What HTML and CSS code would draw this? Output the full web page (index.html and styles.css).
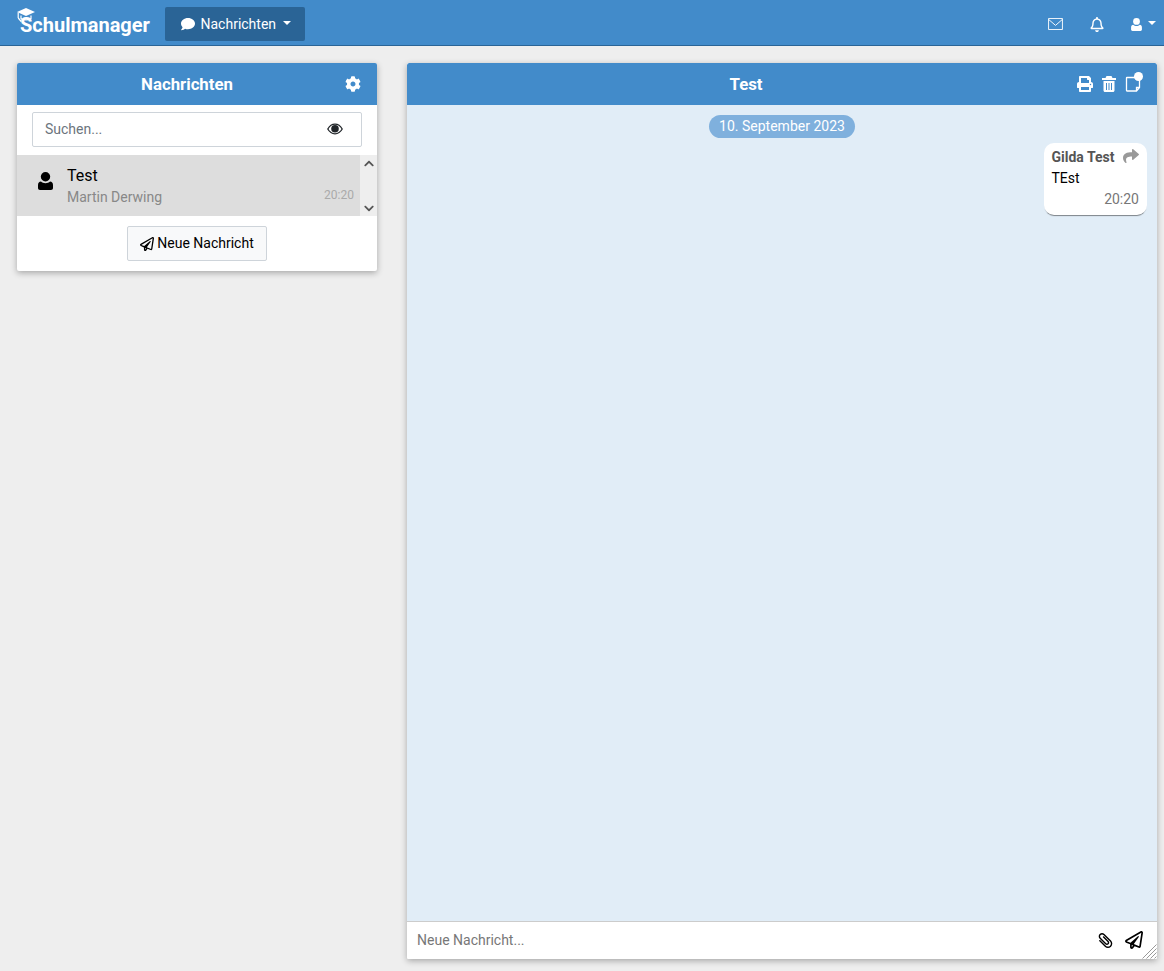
FILE: index.html
```html
<!DOCTYPE html>
<html lang="de">
<head>
    <meta charset="UTF-8">
    <meta name="viewport" content="width=device-width, initial-scale=1.0">
    <title>Schulmanager - Nachrichten</title>
    <link rel="stylesheet" href="styles.css">
</head>
<body>
    <nav class="navbar">
        <a class="brand" href="#">
            <svg class="brand-cap" viewBox="0 0 18 15">
                <path d="M9 0l9 4-9 4-9-4z"/>
                <path class="cap-line" d="M4 7.500v3c1.500 1.800 8.500 1.800 10 0v-3M1.200 4.500v5.500M1.200 10l3 3.500"/>
            </svg>
            <span>Schulmanager</span>
        </a>
        <button class="nav-menu">
            <svg class="icon-14" viewBox="0 0 512 512"><path d="M256 32C114.6 32 0 125.1 0 240c0 49.6 21.4 95 57 130.7C44.5 421.1 2.7 466 2.2 466.5c-2.2 2.3-2.8 5.7-1.5 8.7S4.8 480 8 480c66.3 0 116-31.8 140.6-51.4 32.7 12.3 69 19.4 107.4 19.4 141.4 0 256-93.1 256-208S397.4 32 256 32z"/></svg>
            <span>Nachrichten</span>
            <i class="caret"></i>
        </button>
        <div class="nav-right">
            <svg class="nav-mail" viewBox="0 0 16 13"><path d="M.5.5h15v12H.5zM.5 1.500 8 8l7.500-6.500" fill="none" stroke="#fff"/></svg>
            <svg class="nav-bell" viewBox="0 0 448 512"><path d="M439.39 362.29c-19.32-20.76-55.47-51.99-55.47-154.29 0-77.7-54.48-139.9-127.94-155.16V32c0-17.67-14.32-32-31.98-32s-31.98 14.33-31.98 32v20.84C118.56 68.1 64.08 130.3 64.08 208c0 102.3-36.15 133.53-55.47 154.29-6 6.45-8.66 14.16-8.61 21.71.11 16.4 12.98 32 32.1 32h383.8c19.12 0 32-15.6 32.1-32 .05-7.55-2.61-15.27-8.61-21.71zM67.53 368c21.22-27.97 44.42-74.33 44.53-159.42 0-.2-.06-.38-.06-.58 0-61.86 50.14-112 112-112s112 50.14 112 112c0 .2-.06.38-.06.58.11 85.1 23.31 131.46 44.53 159.42H67.53zM224 512c35.32 0 63.97-28.65 63.97-64H160.03c0 35.35 28.65 64 63.97 64z"/></svg>
            <div class="nav-user">
                <svg class="nav-user-icon" viewBox="0 0 15 18"><circle cx="7.500" cy="4.700" r="4.700"/><path d="M3 9.500c1 1 2.800 1.700 4.500 1.700s3.500-.7 4.500-1.700c1.800 0 3 1.500 3 3.500v3c0 1.200-.8 2-2 2H2c-1.200 0-2-.8-2-2v-3c0-2 1.200-3.500 3-3.500z"/></svg>
                <i class="caret"></i>
            </div>
        </div>
    </nav>

    <div class="main">
        <section class="panel panel-list">
            <header class="panel-head">
                <h2 class="panel-title">Nachrichten</h2>
                <svg class="icon-16" viewBox="0 0 512 512"><path d="M487.4 315.7l-42.6-24.6c4.3-23.2 4.3-47 0-70.2l42.6-24.6c4.9-2.8 7.1-8.6 5.500-14-11.100-35.600-30-67.800-54.700-94.600-3.800-4.100-10-5.100-14.800-2.300L380.800 110c-17.900-15.400-38.500-27.300-60.800-35.100V25.800c0-5.600-3.900-10.500-9.400-11.700-36.700-8.200-74.300-7.800-109.200 0-5.500 1.200-9.400 6.100-9.400 11.700V75c-22.200 7.900-42.800 19.800-60.800 35.100L88.700 85.500c-4.900-2.800-11-1.900-14.800 2.300-24.700 26.700-43.600 58.900-54.700 94.600-1.700 5.400.6 11.200 5.500 14L67.300 221c-4.300 23.200-4.300 47 0 70.200l-42.6 24.600c-4.900 2.800-7.100 8.600-5.500 14 11.100 35.600 30 67.800 54.700 94.600 3.800 4.100 10 5.100 14.800 2.300l42.600-24.600c17.900 15.400 38.500 27.300 60.800 35.100v49.200c0 5.600 3.900 10.500 9.400 11.700 36.700 8.200 74.300 7.800 109.200 0 5.500-1.200 9.400-6.100 9.400-11.700v-49.200c22.200-7.900 42.800-19.800 60.800-35.100l42.600 24.600c4.900 2.800 11 1.900 14.800-2.300 24.700-26.700 43.600-58.900 54.700-94.600 1.500-5.500-.7-11.300-5.600-14.100zM256 336c-44.100 0-80-35.900-80-80s35.900-80 80-80 80 35.900 80 80-35.900 80-80 80z"/></svg>
            </header>
            <div class="search">
                <input class="search-input" type="text" placeholder="Suchen...">
                <svg class="search-eye" viewBox="0 0 16 12">
                    <path d="M.8 6C2.500 3 5 1.200 8 1.200S13.500 3 15.200 6C13.500 9 11 10.800 8 10.800S2.500 9 .8 6z" fill="none" stroke="currentColor" stroke-width="1.300"/>
                    <circle cx="8" cy="5.700" r="3.800"/>
                </svg>
            </div>
            <div class="thread-wrap">
                <div class="thread">
                    <svg class="thread-avatar" viewBox="0 0 15 18"><circle cx="7.500" cy="4.700" r="4.700"/><path d="M3 9.500c1 1 2.800 1.700 4.500 1.700s3.500-.7 4.500-1.700c1.800 0 3 1.500 3 3.500v3c0 1.200-.8 2-2 2H2c-1.200 0-2-.8-2-2v-3c0-2 1.200-3.500 3-3.500z"/></svg>
                    <div class="thread-text">
                        <div class="thread-subject">Test</div>
                        <div class="thread-from">Martin Derwing</div>
                    </div>
                    <div class="thread-time">20:20</div>
                </div>
                <div class="scroller">
                    <svg class="chevron" viewBox="0 0 448 512"><path d="M240.971 130.524l194.343 194.343c9.373 9.373 9.373 24.569 0 33.941l-22.667 22.667c-9.357 9.357-24.522 9.375-33.901.04L224 227.495 69.255 381.516c-9.379 9.335-24.544 9.317-33.901-.04l-22.667-22.667c-9.373-9.373-9.373-24.569 0-33.941L207.030 130.525c9.372-9.373 24.568-9.373 33.941-.001z"/></svg>
                    <svg class="chevron chevron-down" viewBox="0 0 448 512"><path d="M240.971 130.524l194.343 194.343c9.373 9.373 9.373 24.569 0 33.941l-22.667 22.667c-9.357 9.357-24.522 9.375-33.901.04L224 227.495 69.255 381.516c-9.379 9.335-24.544 9.317-33.901-.04l-22.667-22.667c-9.373-9.373-9.373-24.569 0-33.941L207.030 130.525c9.372-9.373 24.568-9.373 33.941-.001z"/></svg>
                </div>
            </div>
            <div class="new-wrap">
                <button class="new-btn">
                    <svg class="icon-14 icon-plane" viewBox="0 0 512 512"><path d="M440 6.500L24 246.400c-34.400 19.900-31.100 70.800 5.700 85.900L144 379.600V464c0 46.400 59.200 65.500 86.600 28.600l43.800-59.100 111.900 46.200c5.900 2.400 12.100 3.600 18.300 3.600 8.200 0 16.300-2.100 23.600-6.200 12.800-7.200 21.600-20 23.900-34.500l59.400-387.200c6.100-40.100-36.900-68.800-71.500-48.900zM192 464v-64.600l36.600 15.100L192 464zm212.600-28.700l-153.800-63.500L391 169.500c10.700-15.500-9.500-33.500-23.700-21.200L155.800 332.600 48 288 464 48l-59.400 387.300z"/></svg>
                    <span>Neue Nachricht</span>
                </button>
            </div>
        </section>

        <section class="panel panel-chat">
            <header class="panel-head">
                <h2 class="panel-title chat-title">Test</h2>
                <div class="head-icons">
                    <svg class="icon-16" viewBox="0 0 512 512"><path d="M448 192V77.250c0-8.490-3.370-16.620-9.370-22.630L393.370 9.370c-6-6-14.140-9.370-22.630-9.370H96C78.330 0 64 14.330 64 32v160c-35.350 0-64 28.650-64 64v112c0 8.840 7.160 16 16 16h48v96c0 17.670 14.330 32 32 32h320c17.670 0 32-14.330 32-32v-96h48c8.840 0 16-7.160 16-16V256c0-35.350-28.650-64-64-64zm-64 256H128v-96h256v96zm0-224H128V64h192v48c0 8.840 7.160 16 16 16h48v96zm48 72c-13.250 0-24-10.750-24-24 0-13.260 10.750-24 24-24s24 10.740 24 24c0 13.250-10.750 24-24 24z"/></svg>
                    <svg class="icon-trash" viewBox="0 0 14 16"><path fill-rule="evenodd" d="M4.500 0h5l1 2H14v2H0V2h3.500zM1.500 5h11v9.500c0 .8-.7 1.500-1.500 1.500H3c-.8 0-1.500-.7-1.500-1.500zM4 7v7h1V7zM6.500 7v7h1V7zM9 7v7h1V7z"/></svg>
                    <div class="note">
                        <svg class="note-icon" viewBox="0 0 16 16"><path d="M2 1.500h12c.3 0 .5.200.5.500v9.500l-3 3.500H2c-.3 0-.5-.2-.5-.5V2c0-.3.200-.5.500-.5zM11.500 15v-3.500h3" fill="none" stroke="#fff" stroke-width="1.300"/></svg>
                        <i class="note-dot"></i>
                    </div>
                </div>
            </header>
            <div class="chat-body">
                <div class="date-pill">10. September 2023</div>
                <div class="bubble">
                    <div class="bubble-head">
                        <strong>Gilda Test</strong>
                        <svg class="bubble-share" viewBox="0 0 512 512"><path d="M503.691 189.836L327.687 37.851C312.281 24.546 288 35.347 288 56.015v80.053C127.371 137.907 0 170.100 0 322.326c0 61.441 39.581 122.309 83.333 154.132 13.653 9.931 33.111-2.533 28.077-18.631C66.066 312.814 132.917 274.316 288 272.085V360c0 20.700 24.300 31.453 39.687 18.164l176.004-152c11.071-9.562 11.086-26.753 0-36.328z"/></svg>
                    </div>
                    <div class="bubble-text">TEst</div>
                    <div class="bubble-time">20:20</div>
                </div>
            </div>
            <div class="composer">
                <textarea class="composer-input" placeholder="Neue Nachricht..."></textarea>
                <div class="composer-icons">
                    <svg class="icon-clip" viewBox="0 0 512 512"><path d="M67.508 468.467c-58.005-58.013-58.016-151.920 0-209.943l225.011-225.040c44.643-44.645 117.279-44.645 161.920 0 44.743 44.749 44.753 117.186 0 161.944l-189.465 189.490c-31.410 31.413-82.518 31.412-113.926.001-31.479-31.482-31.490-82.453 0-113.944L311.510 110.491c4.687-4.687 12.286-4.687 16.972 0l16.967 16.971c4.685 4.686 4.685 12.283 0 16.969L184.983 304.917c-12.724 12.724-12.730 33.328 0 46.058 12.696 12.697 33.356 12.699 46.054-.001l189.465-189.489c25.987-25.989 25.994-68.060.001-94.056-25.931-25.934-68.119-25.932-94.049 0l-225.010 225.039c-39.249 39.252-39.258 102.795-.001 142.057 39.285 39.290 102.885 39.287 142.162-.028A739446.174 739446.174 0 0 1 439.497 238.490c4.686-4.687 12.282-4.684 16.969.004l16.967 16.971c4.685 4.686 4.689 12.279.004 16.965a755654.128 755654.128 0 0 0-195.881 195.996c-58.034 58.092-152.004 58.093-210.048.041z"/></svg>
                    <svg class="icon-send" viewBox="0 0 512 512"><path d="M440 6.500L24 246.400c-34.400 19.900-31.100 70.800 5.700 85.900L144 379.600V464c0 46.400 59.200 65.500 86.600 28.600l43.800-59.100 111.900 46.200c5.900 2.400 12.100 3.600 18.300 3.600 8.200 0 16.300-2.100 23.600-6.200 12.800-7.200 21.600-20 23.900-34.500l59.400-387.200c6.100-40.100-36.900-68.800-71.500-48.900zM192 464v-64.600l36.600 15.100L192 464zm212.600-28.700l-153.800-63.500L391 169.500c10.700-15.500-9.500-33.500-23.700-21.200L155.800 332.600 48 288 464 48l-59.400 387.300z"/></svg>
                </div>
                <svg class="grip" viewBox="0 0 15 15"><path d="M14.500.5l-14 14M14.500 4.500l-10 10M14.500 8.500l-6 6M14.500 12.500l-2 2" fill="none" stroke="#999"/></svg>
            </div>
        </section>
    </div>
</body>
</html>
```

FILE: styles.css
```css
* { box-sizing: border-box; }
html, body { height: 100%; }
body {
    margin: 0;
    display: flex;
    flex-direction: column;
    overflow: hidden;
    background: #eee;
    color: #000;
    font-family: Roboto, "Liberation Sans", sans-serif;
    font-size: 14px;
}
svg { display: block; fill: currentColor; flex: none; }
button, input, textarea { font-family: inherit; font-size: 14px; }

/* navbar */
.navbar {
    flex: none;
    height: 46px;
    display: flex;
    align-items: center;
    padding: 3px 20px 0 20px;
    background: #428bca;
    border-bottom: 1px solid #2a6496;
    color: #fff;
}
.brand {
    position: relative;
    width: 145px;
    color: #fff;
    font-size: 20px;
    font-weight: 700;
    text-decoration: none;
}
.brand span { position: relative; top: 1px; }
.brand-cap {
    position: absolute;
    left: -3px;
    top: -4px;
    width: 18px;
    height: 15px;
}
.cap-line { fill: none; stroke: #fff; stroke-width: 1.2; }
.nav-menu {
    width: 140px;
    height: 34px;
    display: flex;
    align-items: center;
    padding: 0 0 0 16px;
    border: 0;
    border-radius: 2px;
    background: #2a6496;
    color: #fff;
}
.nav-menu span { margin-left: 5.5px; }
.icon-14 { width: 14px; height: 14px; }
.caret {
    display: inline-block;
    width: 0;
    height: 0;
    border-top: 4px solid #fff;
    border-left: 4px solid transparent;
    border-right: 4px solid transparent;
}
.nav-menu .caret { margin: 0 0 2px 7px; }
.nav-right { margin-left: auto; display: flex; align-items: center; color: #fff; }
.nav-mail { width: 15px; height: 12px; margin-right: 27px; }
.nav-bell { width: 14px; height: 15px; margin-right: 27px; }
.nav-user { display: flex; align-items: center; margin-right: -12px; }
.nav-user-icon { width: 11px; height: 13px; margin-right: 6px; }
.nav-user .caret { margin-bottom: 3px; }

/* panels */
.main {
    flex: 1;
    min-height: 0;
    display: flex;
    align-items: flex-start;
    gap: 30px;
    padding: 17px 7px 12px 17px;
}
.panel {
    background: #fff;
    border-radius: 2px;
    box-shadow: 0 2px 6px rgba(0, 0, 0, 0.3);
    display: flex;
    flex-direction: column;
}
.panel-list { width: 360px; flex: none; height: 208px; }
.panel-chat { flex: 1; height: 100%; overflow: hidden; }
.panel-head {
    flex: none;
    height: 42px;
    display: flex;
    align-items: center;
    padding: 0 16px 0 12px;
    background: #428bca;
    color: #fff;
    border-radius: 2px 2px 0 0;
}
.panel-title {
    flex: 1;
    margin: 0;
    text-align: center;
    font-size: 16.8px;
    font-weight: 700;
}
.chat-title { padding-right: 4px; }
.icon-16 { width: 16px; height: 16px; }

/* left list */
.search { position: relative; padding: 7px 15px 8px; }
.search-input {
    display: block;
    width: 100%;
    height: 35px;
    padding: 0 12px 2px;
    border: 1px solid #ced4da;
    border-radius: 2px;
    color: #495057;
    outline: 0;
}
.search-input::placeholder { color: #6c757d; opacity: 1; }
.search-eye {
    position: absolute;
    left: 310px;
    top: 18px;
    width: 16px;
    height: 12px;
    color: #212529;
}
.thread-wrap { display: flex; height: 61px; }
.thread {
    flex: 1;
    display: flex;
    align-items: center;
    background: #ddd;
    padding: 0 6px 0 21px;
}
.thread-avatar { width: 15px; height: 18px; margin: 0 14px 10px 0; }
.thread-text { flex: 1; padding-top: 1px; }
.thread-subject { font-size: 16px; line-height: 19px; }
.thread-from { margin-top: 3px; line-height: 18px; color: #888; }
.thread-time { margin-top: 19px; font-size: 12px; color: #aaa; }
.scroller {
    width: 17px;
    display: flex;
    flex-direction: column;
    justify-content: space-between;
    align-items: center;
    padding: 3px 0 2px;
    background: #eee;
    color: #555;
}
.chevron { width: 10px; height: 11px; }
.chevron-down { transform: rotate(180deg); }
.new-wrap { display: flex; justify-content: center; padding-top: 10px; }
.new-btn {
    width: 140px;
    height: 35px;
    display: flex;
    align-items: center;
    justify-content: center;
    gap: 3px;
    padding: 0;
    background: #f8f9fa;
    border: 1px solid #ced4da;
    border-radius: 2px;
    color: #000;
}
.new-btn span { position: relative; top: -1px; }

/* chat */
.chat-body {
    flex: 1;
    min-height: 0;
    display: flex;
    flex-direction: column;
    align-items: center;
    padding: 10px 10px 0;
    background: #e1edf7;
}
.head-icons { display: flex; align-items: center; gap: 9px; }
.icon-trash { width: 14px; height: 16px; }
.note { position: relative; }
.note-icon { width: 16px; height: 16px; }
.note-dot {
    position: absolute;
    right: -2px;
    top: -4px;
    width: 9px;
    height: 9px;
    border-radius: 50%;
    background: #fff;
}
.date-pill {
    width: 146px;
    height: 23px;
    line-height: 23px;
    text-align: center;
    border-radius: 12px;
    background: #7fb0dd;
    color: #fff;
}
.bubble {
    align-self: flex-end;
    width: 103px;
    height: 72px;
    margin-top: 5px;
    padding: 6px 8px 0 7.5px;
    background: #fff;
    border-radius: 10px;
    box-shadow: 0 2px 1px -1px rgba(0, 0, 0, 0.45);
    line-height: 16px;
}
.bubble-head { display: flex; justify-content: space-between; align-items: center; color: #555; }
.bubble-share { width: 16px; height: 16px; margin-top: -2px; color: #999; }
.bubble-text { margin-top: 5px; }
.bubble-time { margin-top: 5px; text-align: right; color: #777; }

/* composer */
.composer {
    flex: none;
    position: relative;
    height: 38px;
    border-top: 1px solid #ccc;
    background: #fff;
}
.composer-input {
    display: block;
    width: 100%;
    height: 37px;
    padding: 10px 10px 0;
    border: 0;
    outline: 0;
    resize: none;
    line-height: 17px;
    color: #000;
}
.composer-input::placeholder { color: #777; opacity: 1; }
.composer-icons {
    position: absolute;
    right: 14px;
    top: 9px;
    display: flex;
    align-items: center;
    gap: 12px;
}
.icon-clip { width: 15px; height: 17px; transform: scaleX(-1); }
.icon-send { width: 18px; height: 18px; }
.grip {
    position: absolute;
    right: 0;
    bottom: 0;
    width: 15px;
    height: 15px;
}
```
